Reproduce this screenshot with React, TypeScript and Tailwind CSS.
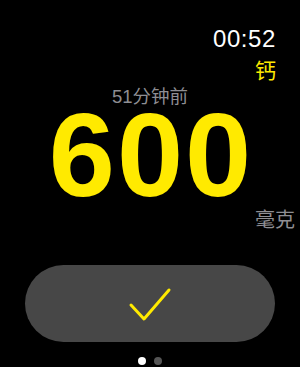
export default function App() {
  const font = { fontFamily: '"Liberation Sans", "Noto Sans CJK SC", sans-serif' };
  return (
    <div className="w-[300px] h-[367px] bg-black flex flex-col overflow-hidden" style={font}>
      <div className="flex flex-col items-end pr-[24px] pt-[25px]">
        <span className="text-white text-[24px] leading-[28px] tracking-[0.6px]">00:52</span>
        <span className="text-[#ffea00] text-[21px] leading-[26px] mt-[5px]">钙</span>
      </div>
      <div className="flex justify-center mt-[2px]">
        <span className="text-[#8e8e93] text-[18.5px] leading-[22px]">51分钟前</span>
      </div>
      <div className="flex justify-center mt-[2px]">
        <span className="text-[#ffea00] text-[119px] leading-[90px] font-bold tracking-[2px] pl-[2px]">600</span>
      </div>
      <div className="flex justify-end pr-[5px] mt-[8px]">
        <span className="text-[#8e8e93] text-[20px] leading-[24px]">毫克</span>
      </div>
      <div className="flex justify-center mt-[33px]">
        <button className="w-[250px] h-[77px] rounded-full bg-[#474747] flex items-center justify-center">
          <svg width="44" height="36" viewBox="0 0 44 36" fill="none">
            <path d="M3 19 L16 33 L41 4" stroke="#ffea00" strokeWidth="3" strokeLinecap="round" strokeLinejoin="round" />
          </svg>
        </button>
      </div>
      <div className="flex justify-center gap-[8px] mt-[15px]">
        <span className="w-[8px] h-[8px] rounded-full bg-white" />
        <span className="w-[8px] h-[8px] rounded-full bg-[#555]" />
      </div>
    </div>
  );
}
